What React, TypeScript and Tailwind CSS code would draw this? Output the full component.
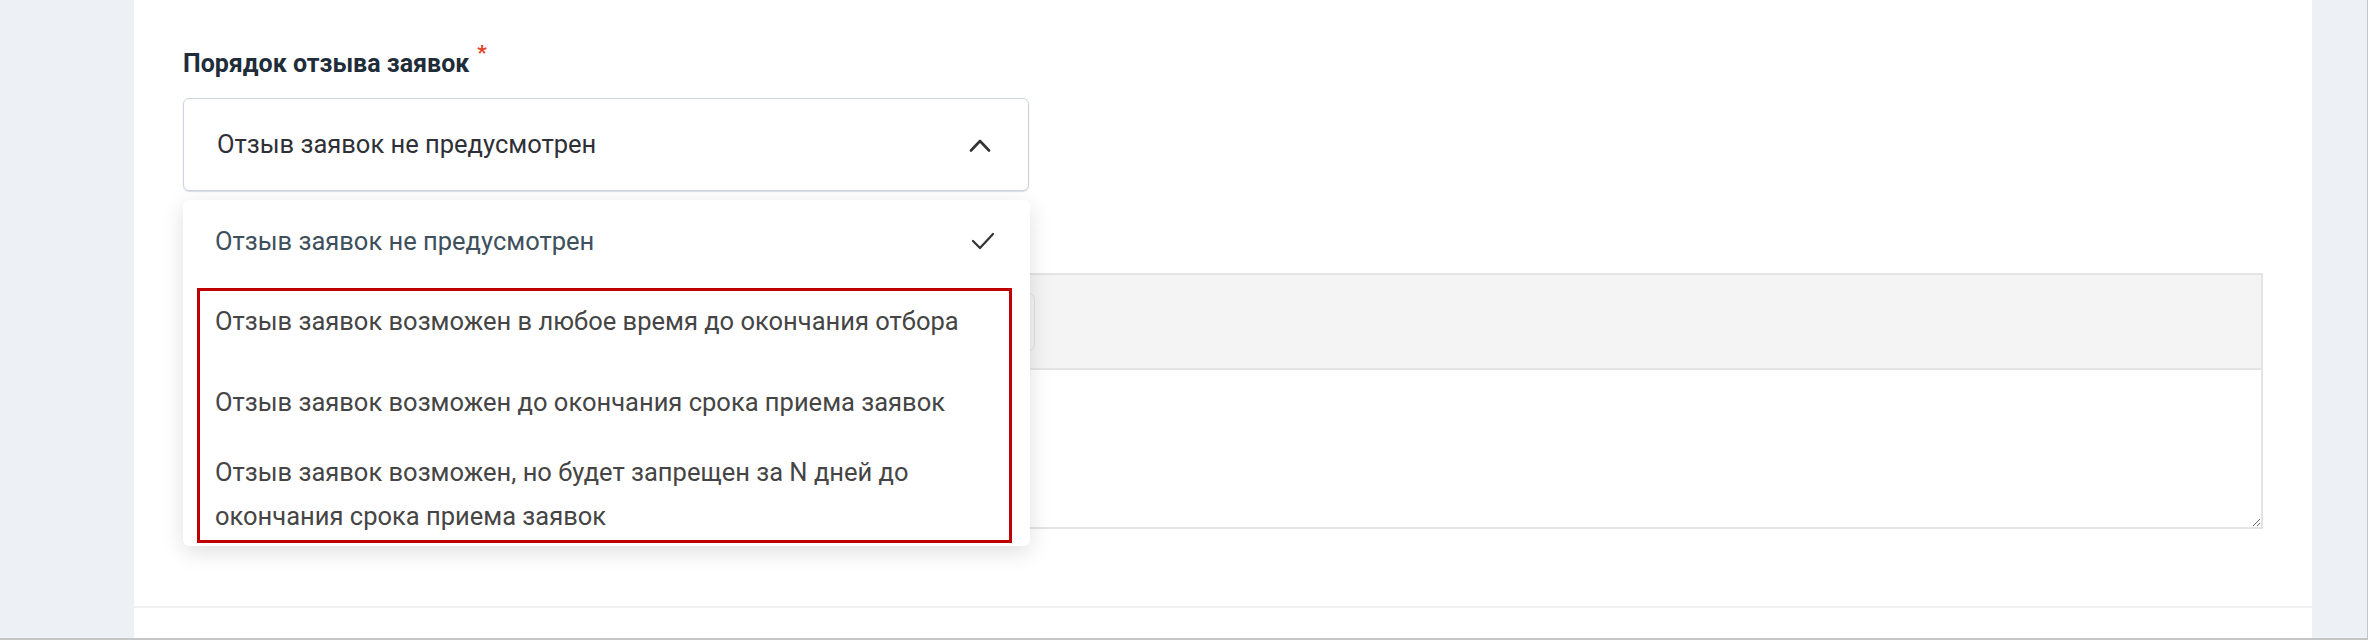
import React from "react";

const font = { fontFamily: "Roboto, 'Noto Sans', sans-serif" };

function ChevronUp() {
  return (
    <svg width="22" height="14" viewBox="0 0 22 14" fill="none">
      <path d="M2 12.5 L11 3 L20 12.5" stroke="#333" strokeWidth="2.6" strokeLinecap="round" strokeLinejoin="round" />
    </svg>
  );
}

function Check() {
  return (
    <svg width="24" height="18" viewBox="0 0 24 18" fill="none">
      <path d="M2 9 L9 16 L22 2" stroke="#333" strokeWidth="2.2" strokeLinecap="round" strokeLinejoin="round" />
    </svg>
  );
}

export default function App() {
  return (
    <div
      className="flex h-[640px] w-[2368px] bg-[#edf1f5] border-r border-b-2 border-[#c6c6c6] overflow-hidden"
      style={font}
    >
      <div className="w-[134px] shrink-0" />
      <div className="w-[2178px] shrink-0 bg-white flex flex-col">
        <div className="h-[606px] shrink-0 pl-[49px] pr-[49px] pt-[49px]">
          <div className="flex items-start leading-[30px]">
            <span className="text-[25px] font-bold text-[#1f2d3a] tracking-[0px]">
              Порядок отзыва заявок
            </span>
            <span className="ml-[8px] -mt-[6px] text-[21px] leading-[20px] font-bold text-[#e2401f]">*</span>
          </div>

          <div className="relative mt-[19px] w-[846px] z-10">
            <div className="h-[93px] rounded-[6px] border border-[#ccd5dd] shadow-[0_1px_1px_rgba(140,160,175,0.35)] flex items-center justify-between pl-[33px] pr-[37px]">
              <span className="text-[25.5px] text-[#2f2f36]">Отзыв заявок не предусмотрен</span>
              <ChevronUp />
            </div>

            <div className="absolute left-0 top-[102px] w-[847px] bg-white rounded-[6px] shadow-[0_6px_22px_rgba(0,0,0,0.13)]">
              <div className="flex items-center justify-between pl-[32px] pr-[35px] pt-[19px] pb-[19px] leading-[44px] text-[25.5px] text-[#3e505c]">
                <span>Отзыв заявок не предусмотрен</span>
                <Check />
              </div>
              <div className="pl-[32px] pt-[17px] pb-[17px] leading-[44px] text-[25.5px] text-[#454545]">
                Отзыв заявок возможен в любое время до окончания отбора
              </div>
              <div className="pl-[32px] pt-[20px] pb-[13px] leading-[44px] text-[25.5px] text-[#454545]">
                Отзыв заявок возможен до окончания срока приема заявок
              </div>
              <div className="pl-[32px] pt-[13px] pb-[8px] leading-[44px] text-[25.5px] text-[#454545] whitespace-nowrap">
                Отзыв заявок возможен, но будет запрещен за N дней до
                <br />
                окончания срока приема заявок
              </div>
              <div className="absolute left-[14px] top-[88px] w-[815px] h-[255px] border-[3px] border-[#c00000] pointer-events-none" />
            </div>
          </div>

          <div className="mt-[82px] border-2 border-[#e4e4e4] flex flex-col">
            <div className="h-[93px] bg-[#f4f4f4] pt-[17px] pl-[0px]">
              <div className="w-[850px] h-[60px] rounded-[8px] border border-[#e2e2e2]" />
            </div>
            <textarea
              defaultValue=""
              className="block h-[159px] w-full border-t-2 border-[#e4e4e4] bg-white resize-y outline-none"
            />
          </div>
        </div>
        <div className="flex-1 border-t-2 border-[#f1f1f1]" />
      </div>
      <div className="flex-1" />
    </div>
  );
}
